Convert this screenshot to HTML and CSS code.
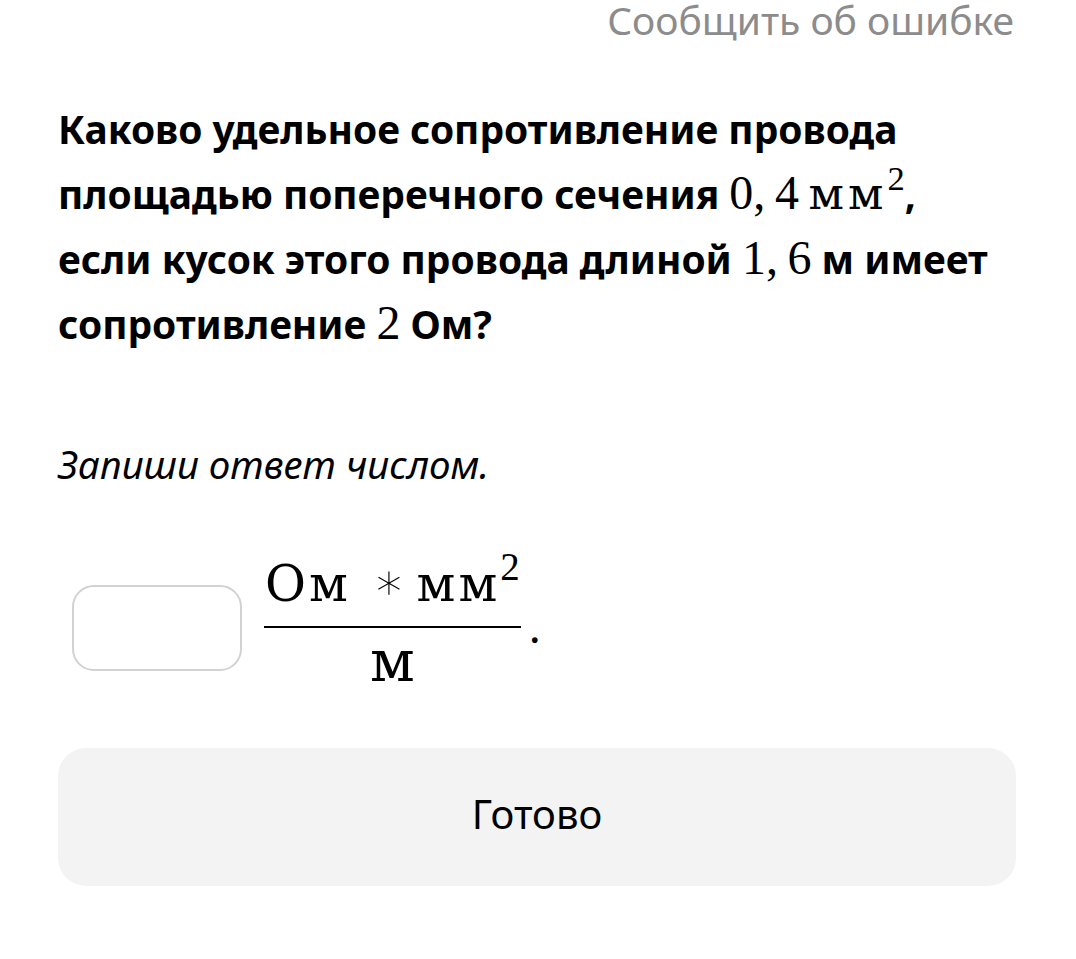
FILE: index.html
```html
<!DOCTYPE html>
<html lang="ru">
<head>
<meta charset="utf-8">
<title>Задание</title>
<link rel="stylesheet" href="styles.css">
</head>
<body>
<main class="page">
  <div class="report-row">
    <a class="report-link" href="#">Сообщить об ошибке</a>
  </div>
  <p class="question">Каково удельное сопротивление провода площадью поперечного сечения <span class="math">0,<span class="thin"></span>4<span class="thin"></span><span class="mtext">мм</span><span class="sup">2</span></span>, если кусок этого провода длиной <span class="math">1,<span class="thin"></span>6</span> м имеет сопротивление <span class="math">2</span> Ом?</p>
  <p class="hint">Запиши ответ числом.</p>
  <div class="answer-row">
    <input class="answer-input" type="text" aria-label="Ответ">
    <span class="frac">
      <span class="num"><span class="mtext">Ом</span><span class="op">∗</span><span class="mtext">мм</span><span class="sup">2</span></span>
      <span class="bar"></span>
      <span class="den"><span class="mtext">м</span></span>
    </span>
    <span class="dot">.</span>
  </div>
  <button class="done-btn" type="button">Готово</button>
</main>
</body>
</html>
```
FILE: styles.css
```css
* { box-sizing: border-box; }
html, body { margin: 0; padding: 0; background: #fff; }
body { font-family: "Noto Sans", "Open Sans", sans-serif; color: #000; }

.page {
  padding: 0 60px 40px 58px;
  display: flex;
  flex-direction: column;
}

.report-row {
  display: flex;
  justify-content: flex-end;
  padding-right: 2px;
}
.report-link {
  font-size: 39px;
  line-height: 40px;
  color: #8c8c8c;
  text-decoration: none;
}

.question {
  margin: 57px 0 0 0;
  padding-right: 14px;
  font-weight: 700;
  font-size: 38.9px;
  line-height: 64px;
}

.math {
  font-family: "Liberation Serif", "DejaVu Serif", serif;
  font-weight: 400;
  font-size: 48px;
}
.mtext {
  font-family: "DejaVu Serif", "Liberation Serif", serif;
  font-size: 0.95em;
  letter-spacing: 4px;
}
.thin { display: inline-block; width: 0.2em; }
.sup {
  font-family: "Liberation Serif", serif;
  font-size: 0.72em;
  vertical-align: 0.55em;
  line-height: 0;
}

.hint {
  margin: 84px 0 0 0;
  font-style: italic;
  font-size: 38.5px;
  line-height: 48px;
}

.answer-row {
  margin-top: 73px;
  display: flex;
  align-items: center;
}
.answer-input {
  width: 170px;
  height: 86px;
  margin: 6px 22px 0 14px;
  border: 2px solid #d2d2d2;
  border-radius: 22px;
  background: #fff;
  outline: none;
  font-size: 36px;
  padding: 0 16px;
}
.frac {
  display: inline-flex;
  flex-direction: column;
  align-items: center;
  font-family: "Liberation Serif", "DejaVu Serif", serif;
  font-size: 50px;
}
.num {
  font-size: 50px;
  line-height: 46px;
  padding: 0 1px;
  white-space: nowrap;
}
.num .mtext {
  font-size: 1em;
  letter-spacing: 3px;
}
.num .sup { font-size: 0.78em; margin-left: 0; }
.op {
  display: inline-block;
  font-family: "DejaVu Sans", sans-serif;
  font-size: 1.02em;
  font-weight: 200;
  margin: 0 0.22em 0 0.44em;
  transform: translateY(-2px);
}
.bar {
  align-self: stretch;
  height: 2px;
  background: #000;
  margin-top: 19px;
}
.den {
  margin-top: 5px;
  font-size: 64px;
  line-height: 54px;
}
.den .mtext { letter-spacing: 0; font-size: 0.9em; }
.dot {
  align-self: flex-start;
  margin: 42px 0 0 8px;
  font-family: "Liberation Serif", serif;
  font-size: 48px;
  line-height: 48px;
}

.done-btn {
  margin-top: 59px;
  height: 138px;
  width: 100%;
  padding: 0 0 8px 0;
  border: none;
  border-radius: 28px;
  background: #f3f3f3;
  font-family: "Noto Sans", "Open Sans", sans-serif;
  font-size: 40px;
  color: #000;
  cursor: pointer;
}
```
